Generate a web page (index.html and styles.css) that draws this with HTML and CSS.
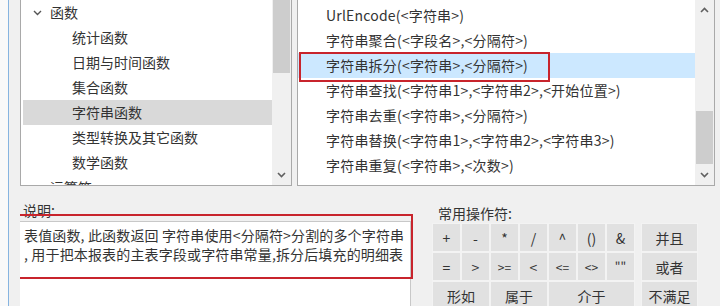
FILE: index.html
```html
<!DOCTYPE html>
<html lang="zh-CN">
<head>
    <meta charset="UTF-8">
    <title>函数选择</title>
    <link rel="stylesheet" href="styles.css">
</head>
<body>
    <div class="edge"></div>
    <div class="main">
        <div class="top">
            <div class="panel tree">
                <div class="rows">
                    <div class="row group">
                        <svg class="chev" width="9" height="6" viewBox="0 0 9 6"><path d="M1 1 L4.5 4.5 L8 1" fill="none" stroke="#555" stroke-width="1.4"/></svg>
                        函数
                    </div>
                    <div class="row child">统计函数</div>
                    <div class="row child">日期与时间函数</div>
                    <div class="row child">集合函数</div>
                    <div class="row child selected">字符串函数</div>
                    <div class="row child">类型转换及其它函数</div>
                    <div class="row child">数学函数</div>
                    <div class="row group">运算符</div>
                </div>
                <div class="vscroll">
                    <div class="thumb tree-thumb"></div>
                    <div class="arrow down">
                        <svg width="9" height="6" viewBox="0 0 9 6"><path d="M1 1 L4.5 4.5 L8 1" fill="none" stroke="#606060" stroke-width="1.6"/></svg>
                    </div>
                </div>
            </div>
            <div class="panel list">
                <div class="rows">
                    <div class="item">UrlEncode(&lt;字符串&gt;)</div>
                    <div class="item">字符串聚合(&lt;字段名&gt;,&lt;分隔符&gt;)</div>
                    <div class="item active">字符串拆分(&lt;字符串&gt;,&lt;分隔符&gt;)<span class="mark item-mark"></span></div>
                    <div class="item">字符串查找(&lt;字符串1&gt;,&lt;字符串2&gt;,&lt;开始位置&gt;)</div>
                    <div class="item">字符串去重(&lt;字符串&gt;,&lt;分隔符&gt;)</div>
                    <div class="item">字符串替换(&lt;字符串1&gt;,&lt;字符串2&gt;,&lt;字符串3&gt;)</div>
                    <div class="item">字符串重复(&lt;字符串&gt;,&lt;次数&gt;)</div>
                </div>
                <div class="vscroll">
                    <div class="arrow up">
                        <svg width="9" height="6" viewBox="0 0 9 6"><path d="M1 5 L4.5 1.5 L8 5" fill="none" stroke="#606060" stroke-width="1.6"/></svg>
                    </div>
                    <div class="thumb list-thumb"></div>
                    <div class="arrow down">
                        <svg width="9" height="6" viewBox="0 0 9 6"><path d="M1 1 L4.5 4.5 L8 1" fill="none" stroke="#606060" stroke-width="1.6"/></svg>
                    </div>
                </div>
            </div>
        </div>
        <div class="bottom">
            <div class="desc">
                <div class="label">说明:</div>
                <div class="textbox">
                    表值函数, 此函数返回 字符串使用&lt;分隔符&gt;分割的多个字符串<br>
                    , 用于把本报表的主表字段或字符串常量,拆分后填充的明细表
                </div>
                <span class="mark desc-mark"></span>
            </div>
            <div class="ops">
                <div class="label">常用操作符:</div>
                <div class="grid">
                    <button class="op">+</button>
                    <button class="op">-</button>
                    <button class="op">*</button>
                    <button class="op">/</button>
                    <button class="op">^</button>
                    <button class="op">()</button>
                    <button class="op">&amp;</button>
                    <button class="op logic">并且</button>
                    <button class="op">=</button>
                    <button class="op">&gt;</button>
                    <button class="op small">&gt;=</button>
                    <button class="op">&lt;</button>
                    <button class="op small">&lt;=</button>
                    <button class="op small">&lt;&gt;</button>
                    <button class="op small">""</button>
                    <button class="op logic">或者</button>
                    <button class="op span2">形如</button>
                    <button class="op span2">属于</button>
                    <button class="op span3">介于</button>
                    <button class="op logic">不满足</button>
                </div>
            </div>
        </div>
    </div>
</body>
</html>
```

FILE: styles.css
```css
body {
    margin: 0;
    width: 720px;
    height: 306px;
    overflow: hidden;
    display: flex;
    background: #f0f0f0;
    font-family: "Noto Sans CJK SC", "Noto Sans", sans-serif;
    font-size: 14px;
    color: #333;
}

.edge {
    width: 8px;
    background: #f9f9f9;
    border-right: 1px solid #86b4e0;
    flex: none;
}

.main {
    flex: 1;
    padding-left: 11px;
}

.top {
    display: flex;
    gap: 5px;
    margin-top: -1px;
    height: 187px;
}

.panel {
    display: flex;
    background: #fff;
    border: 1px solid #a9a9a9;
    height: 185px;
    overflow: hidden;
}

.tree {
    width: 270px;
}

.list {
    width: 416px;
}

.rows {
    flex: 1;
    position: relative;
}

.row {
    height: 25px;
    line-height: 25px;
    white-space: nowrap;
    margin-left: 2px;
}

.group {
    display: flex;
    align-items: center;
    padding-left: 27px;
}

.chev {
    margin-left: -17px;
    margin-right: 8px;
}

.child {
    padding-left: 49px;
}

.selected {
    background: #d9d9d9;
}

.list .rows {
    padding-top: 3px;
}

.item {
    height: 25px;
    line-height: 25px;
    padding-left: 28px;
    white-space: nowrap;
    letter-spacing: 0.2px;
    position: relative;
}

.active {
    background: #cce8ff;
}

.mark {
    position: absolute;
    border: 2px solid #c8242c;
    box-sizing: border-box;
}

.item-mark {
    left: 1px;
    top: -1px;
    width: 251px;
    height: 30px;
}

.vscroll {
    width: 19px;
    background: #f0f0f0;
    display: flex;
    flex-direction: column;
    align-items: center;
}

.thumb {
    width: 17px;
    background: #cdcdcd;
}

.tree-thumb {
    height: 73px;
}

.list-thumb {
    height: 53px;
    margin-top: 91px;
}

.arrow {
    height: 20px;
    width: 19px;
    display: flex;
    align-items: center;
    justify-content: center;
}

.down {
    margin-top: auto;
}

.bottom {
    display: flex;
    height: 120px;
    overflow: hidden;
}

.desc {
    position: relative;
    width: 392px;
    margin-left: -1px;
    padding-top: 14px;
}

.label {
    height: 20px;
    line-height: 20px;
    padding-left: 4px;
}

.textbox {
    margin-top: 1px;
    height: 100px;
    background: #fff;
    border: 1px solid #c8c8c8;
    padding: 4px 4px 0;
    line-height: 19px;
    white-space: nowrap;
    letter-spacing: 0.15px;
}

.desc-mark {
    left: -6px;
    top: 28px;
    width: 400px;
    height: 65px;
}

.ops {
    margin-left: 21px;
    padding-top: 17px;
}

.ops .label {
    padding-left: 6px;
}

.grid {
    display: grid;
    grid-template-columns: repeat(7, 29px) 57px;
    grid-auto-rows: 29px;
}

.op {
    margin: 0;
    padding: 0;
    font: inherit;
    color: #333;
    background: #e1e1e1;
    border: 1px solid #f3f3f3;
}

.small {
    font-size: 12px;
}

.logic {
    margin-left: 6px;
    width: 57px;
}

.span2 {
    grid-column: span 2;
}

.span3 {
    grid-column: span 3;
}
```
